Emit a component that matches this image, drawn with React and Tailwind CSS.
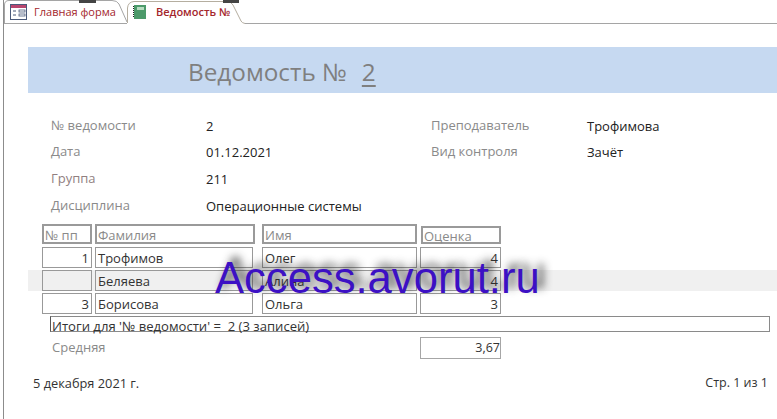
const Box = ({ className, children }) => (
  <div className={"border border-[#999] flex items-center pt-[2px] text-[13px] leading-none text-[#333] px-[2px] " + className}>{children}</div>
);

const Head = ({ className, children }) => (
  <div className={"border-2 border-[#9a9a9a] flex items-center pt-[2px] text-[13px] leading-none text-[#8a8a8a] px-[1px] " + className}>{children}</div>
);

const Field = ({ label, value, labelW, labelColor = "text-[#8a8a8a]", h = "h-[26px]" }) => (
  <div className={"flex items-center text-[13px] " + h}>
    <div className={labelColor + " " + labelW}>{label}</div>
    <div className="text-[#222] pt-[2px]">{value}</div>
  </div>
);

const rows = [
  { n: "1", last: "Трофимов", first: "Олег", mark: "4" },
  { n: "", last: "Беляева", first: "Алина", mark: "4", alt: true },
  { n: "3", last: "Борисова", first: "Ольга", mark: "3" },
];

export default function App() {
  return (
    <div className="relative w-[777px] h-[419px] overflow-hidden bg-white font-['Open_Sans','Noto_Sans',sans-serif]">
      <div className="absolute left-[3px] top-0 bottom-0 w-[1px] bg-[#8c8c8c]" />

      {/* tabs */}
      <div className="relative flex h-[24px] border-b border-[#a5a5a5] ml-[4px]">
        <div className="relative w-[123px] h-[24px] flex items-center pl-[6px] gap-[7px] text-[11px] text-[#a4262c]">
          <svg className="absolute left-0 top-0" width="124" height="24" viewBox="0 0 124 24" fill="none">
            <path d="M0.5 23V5Q0.5 0.5 5 0.5H108Q113 0.5 115 4L123 22" stroke="#a5a5a5" />
          </svg>
          <svg width="17" height="16" viewBox="0 0 17 16" className="relative shrink-0" fill="none">
            <rect x="0.5" y="0.5" width="16" height="15" fill="#fff" stroke="#4a5a7a" />
            <rect x="1" y="1" width="15" height="3" fill="#b8456e" />
            <path d="M3 7H6M3 11H6" stroke="#4a5a7a" />
            <rect x="9" y="6" width="6" height="2" fill="#fff" stroke="#4a5a7a" strokeWidth="0.8" />
            <rect x="9" y="10" width="6" height="2" fill="#fff" stroke="#4a5a7a" strokeWidth="0.8" />
          </svg>
          <span className="relative">Главная форма</span>
        </div>
        <div className="relative w-[118px] h-[24px] -mb-[1px] bg-white flex items-center pl-[6px] gap-[10px] text-[11px] font-semibold text-[#a4262c]">
          <svg className="absolute left-0 top-0" width="118" height="24" viewBox="0 0 118 24" fill="none">
            <path d="M0.5 23V8Q1 2 7 1.5H100Q104 1.5 106 5L114 21Q115 23 118 23.5" stroke="#b5aea0" />
          </svg>
          <svg width="13" height="14" viewBox="0 0 13 14" className="relative shrink-0" fill="none">
            <rect x="1" y="0" width="12" height="14" fill="#4c9a6a" />
            <rect x="4" y="2" width="7" height="3" fill="#b7dcc0" />
            <path d="M0.5 1V13" stroke="#222" strokeDasharray="1 1" />
          </svg>
          <span className="relative">Ведомость №</span>
        </div>
        <div className="absolute left-[75px] top-0 w-[17px] h-[3px] bg-[#444]" />
        <div className="absolute left-[219px] top-0 w-[16px] h-[3px] bg-[#444]" />
      </div>

      {/* header band */}
      <div className="ml-[28px] mt-[23px] h-[46px] bg-[#c6d9f1] flex items-center pt-[5px] pl-[160px] gap-[15px] text-[24.3px] text-[#7f7f7f]">
        <span>Ведомость №</span>
        <span className="underline underline-offset-4">2</span>
      </div>

      {/* fields */}
      <div className="flex mt-[20px] ml-[51px]">
        <div className="w-[380px] flex flex-col">
          <Field label="№ ведомости" value="2" labelW="w-[155px]" />
          <Field label="Дата" value="01.12.2021" labelW="w-[155px]" />
          <Field label="Группа" value="211" labelW="w-[155px]" labelColor="text-[#917f7f]" h="h-[28px]" />
          <Field label="Дисциплина" value="Операционные системы" labelW="w-[155px]" />
        </div>
        <div className="flex flex-col">
          <Field label="Преподаватель" value="Трофимова" labelW="w-[156px]" />
          <Field label="Вид контроля" value="Зачёт" labelW="w-[156px]" />
        </div>
      </div>

      {/* table */}
      <div className="flex mt-[5px] ml-[42px] items-end h-[20px]">
        <Head className="w-[50px] h-[20px]">№ пп</Head>
        <Head className="w-[160px] h-[20px] ml-[3px]">Фамилия</Head>
        <Head className="w-[155px] h-[20px] ml-[7px]">Имя</Head>
        <Head className="w-[80px] h-[18px] ml-[4px]">Оценка</Head>
      </div>
      <div className="flex flex-col gap-[2px] mt-[3px]">
        {rows.map((r, i) => (
          <div key={i} className={"flex h-[21px] ml-[28px] pl-[14px]" + (r.alt ? " bg-[#f0f0f0]" : "")}>
            <Box className="w-[50px] justify-end">{r.n}</Box>
            <Box className="w-[158px] ml-[3px]">{r.last}</Box>
            <Box className="w-[155px] ml-[9px]">{r.first}</Box>
            <Box className="w-[81px] ml-[3px] justify-end">{r.mark}</Box>
          </div>
        ))}
      </div>

      {/* totals */}
      <div className="ml-[50px] mr-[7px] mt-[2px] h-[16px] border border-[#8a8a8a] border-l-[#555] flex items-center pt-[5px] px-[1px] text-[13.1px] leading-none whitespace-pre text-[#333]">
        Итоги для '№ ведомости' =  2 (3 записей)
      </div>
      <div className="flex items-center mt-[5px] ml-[52px] h-[22px]">
        <div className="w-[368px] text-[13px] text-[#8a8a8a]">Средняя</div>
        <div className="w-[81px] h-[22px] border border-[#a6a6a6] flex items-center justify-end text-[12.5px] text-[#333]">3,67</div>
      </div>

      {/* footer */}
      <div className="flex justify-between mt-[15px] ml-[33px] mr-[9px] text-[12.8px] leading-[18px] text-[#333]">
        <span>5 декабря 2021 г.</span>
        <span className="text-[12.5px]">Стр. 1 из 1</span>
      </div>

      {/* watermark */}
      <div className="absolute left-[215px] top-[254px] text-[43.6px] leading-[48px] whitespace-nowrap font-['Liberation_Sans',sans-serif] text-[#3c10c4] [text-shadow:6px_-5px_8px_rgba(40,40,40,0.9)]">
        Access.avorut.ru
      </div>
    </div>
  );
}
